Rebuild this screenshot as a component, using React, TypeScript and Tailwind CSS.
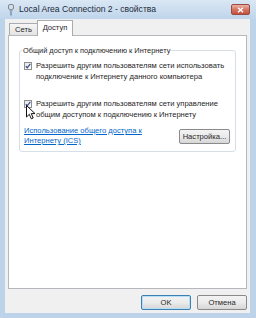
import React from 'react';

function Check({ cursor }: { cursor?: boolean }) {
    return (
        <span className="relative mt-[2px] flex h-[8px] w-[8px] shrink-0 items-center justify-center border border-[#8f8f8f] bg-gradient-to-br from-[#e6e6e6] to-[#ffffff]">
            <svg width="6" height="6" viewBox="0 0 6 6">
                <path d="M0.8 3.2 L2.3 4.8 L5.3 0.9" fill="none" stroke="#3b4f8a" strokeWidth="1.3" />
            </svg>
            {cursor && (
                <svg className="absolute top-[4px] left-[1px]" width="10" height="15" viewBox="0 0 10 15">
                    <path
                        d="M0.5 0.5 L0.5 12 L3.3 9.3 L5.3 13.8 L7.2 13 L5.3 8.6 L9 8.6 Z"
                        fill="#ffffff"
                        stroke="#111111"
                        strokeWidth="1"
                        strokeLinejoin="round"
                    />
                </svg>
            )}
        </span>
    );
}

function WinButton({ label, width, focused }: { label: string; width: string; focused?: boolean }) {
    return (
        <div
            className={`flex h-[15px] items-center justify-center rounded-[2px] border bg-gradient-to-b from-[#f3f3f3] via-[#ebebeb] to-[#d6d6d6] ${width} ${
                focused ? 'border-[#3c7fb1] shadow-[inset_0_0_0_1px_#b6e0f7]' : 'border-[#8a8a8a]'
            }`}
        >
            {label}
        </div>
    );
}

export default function App() {
    return (
        <div className="flex h-[318px] w-[256px] flex-col bg-[#bcd3ea] font-['Liberation_Sans',Arial,sans-serif] text-[7.6px] leading-[11px] text-[#262626]">
            <header className="flex h-[19px] shrink-0 items-center bg-gradient-to-b from-[#dae7f4] to-[#bfd5eb] pr-[6px] pl-[8px]">
                <svg width="6" height="12" viewBox="0 0 6 12">
                    <rect x="0.5" y="0.5" width="5" height="5" rx="1.5" fill="#d7dde3" stroke="#7a8896" />
                    <rect x="1.5" y="5.5" width="3" height="2" fill="#9aa6b2" />
                    <path d="M3 7.5 V11.5" stroke="#5f7fa6" strokeWidth="1.2" />
                </svg>
                <span className="ml-[5px] text-[8.6px] text-[#1c2a3a]">Local Area Connection 2 - свойства</span>
                <div className="ml-auto flex h-[11px] w-[19px] items-center justify-center rounded-[2px] border border-[#9a4a3e] bg-gradient-to-b from-[#e9b3a6] via-[#d67563] to-[#c2533f]">
                    <svg width="7" height="6" viewBox="0 0 7 6">
                        <path d="M1 0.8 L6 5.2 M6 0.8 L1 5.2" stroke="#ffffff" strokeWidth="1.5" />
                    </svg>
                </div>
            </header>

            <div className="mr-[6px] ml-[5px] flex flex-1 flex-col bg-[#f0f0f0] px-[3px] pt-[1px]">
                <div className="flex h-[16px] items-end pl-[1px]">
                    <div className="mb-[1px] flex h-[12px] w-[29px] items-center justify-center border border-b-0 border-[#a9abb0] bg-gradient-to-b from-[#f6f6f6] to-[#e3e3e3]">
                        Сеть
                    </div>
                    <div className="relative z-10 -ml-px flex h-[16px] w-[36px] items-center justify-center border border-b-0 border-[#a9abb0] bg-white pb-[2px]">
                        Доступ
                    </div>
                </div>

                <div className="-mt-px flex-1 border border-[#b5b7bc] bg-white px-[10px] pt-[9px]">
                    <fieldset className="rounded-[3px] border border-[#d5dfe5] pr-[4px] pb-[5px] pl-[4px]">
                        <legend className="-ml-[2px] px-[1px] text-[7.4px]">Общий доступ к подключению к Интернету</legend>

                        <div className="mt-[4px] flex gap-[4px]">
                            <Check />
                            <p>
                                Разрешить другим пользователям сети использовать подключение к Интернету данного
                                компьютера
                            </p>
                        </div>

                        <div className="mt-[16px] flex gap-[4px]">
                            <Check cursor />
                            <p>
                                Разрешить другим пользователям сети управление общим доступом к подключению к
                                Интернету
                            </p>
                        </div>

                        <div className="mt-[6px] flex items-center justify-between pr-[1px]">
                            <a className="leading-[10px] text-[#0066cc] underline">
                                Использование общего доступа к
                                <br />
                                Интернету (ICS)
                            </a>
                            <WinButton label="Настройка..." width="w-[51px]" />
                        </div>
                    </fieldset>
                </div>

                <div className="flex justify-end gap-[6px] pt-[6px] pb-[3px]">
                    <WinButton label="OK" width="w-[50px]" focused />
                    <WinButton label="Отмена" width="w-[50px]" />
                </div>
            </div>

            <div className="h-[5px] shrink-0" />
        </div>
    );
}
